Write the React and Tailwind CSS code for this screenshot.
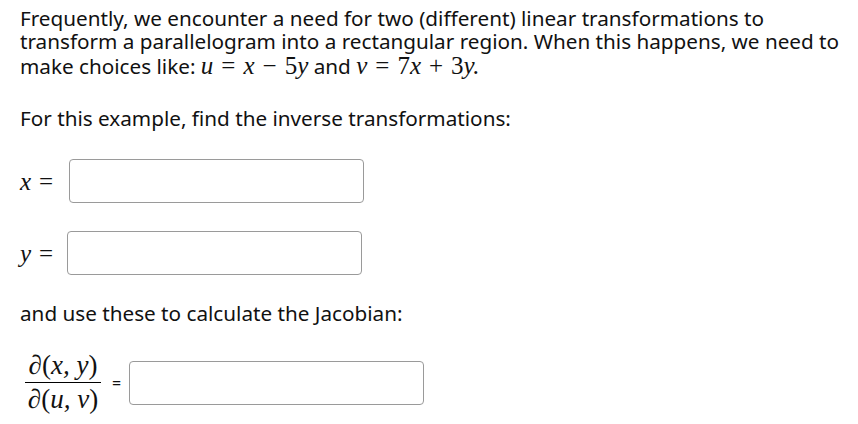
import React from "react";

const sans = { fontFamily: '"Noto Sans", "DejaVu Sans", sans-serif' };

function M({ children, className = "" }) {
  // inline math, serif italic like the KaTeX output
  return (
    <span className={`font-['Liberation_Serif',serif] italic text-[25px] ${className}`}>
      {children}
    </span>
  );
}

function Op({ children }) {
  return <span className="not-italic mx-[8px]">{children}</span>;
}

function Box({ className = "" }) {
  return <div className={`h-[44px] rounded-[4px] border border-[#9a9a9a] bg-white ${className}`} />;
}

export default function App() {
  return (
    <div className="w-[858px] h-[424px] bg-white text-[#111] px-5 pt-[7px]" style={sans}>
      {/* enunciado */}
      <p className="text-[20.7px] leading-[23px] h-[69px] whitespace-nowrap">
        Frequently, we encounter a need for two (different) linear transformations to
        <br />
        transform a parallelogram into a rectangular region. When this happens, we need to
        <br />
        make choices like:{" "}
        <M className="leading-none">
          u<Op>=</Op>x<Op>−</Op><span className="not-italic">5</span>y
        </M>{" "}
        and{" "}
        <M className="leading-none">
          v<Op>=</Op><span className="not-italic">7</span>x<Op>+</Op><span className="not-italic">3</span>y.
        </M>
      </p>

      <p className="text-[20.7px] leading-[23px] mt-[31px]">For this example, find the inverse transformations:</p>

      {/* x = */}
      <div className="flex items-center mt-[29px]">
        <M className="w-[49px] leading-none">x<Op>=</Op></M>
        <Box className="w-[295px]" />
      </div>

      {/* y = */}
      <div className="flex items-center mt-[28px]">
        <M className="w-[47px] leading-none">y<Op>=</Op></M>
        <Box className="w-[295px]" />
      </div>

      <p className="text-[20.7px] leading-[23px] mt-[27px]">and use these to calculate the Jacobian:</p>

      {/* jacobiano */}
      <div className="flex items-center mt-[19px]">
        <div className="flex flex-col items-center w-[80px] ml-[3px]">
          <div className="h-[38px] flex items-end pb-[3px]">
            <M className="text-[27px] leading-none">
              <span className="not-italic">∂(</span>x, y<span className="not-italic">)</span>
            </M>
          </div>
          <div className="w-[76px] h-px bg-black" />
          <div className="h-[38px] flex items-start pt-[3px]">
            <M className="text-[27px] leading-none">
              <span className="not-italic">∂(</span>u, v<span className="not-italic">)</span>
            </M>
          </div>
        </div>
        <span className="text-[16px] ml-[9px] mr-[8px]">=</span>
        <Box className="w-[295px]" />
      </div>
    </div>
  );
}
